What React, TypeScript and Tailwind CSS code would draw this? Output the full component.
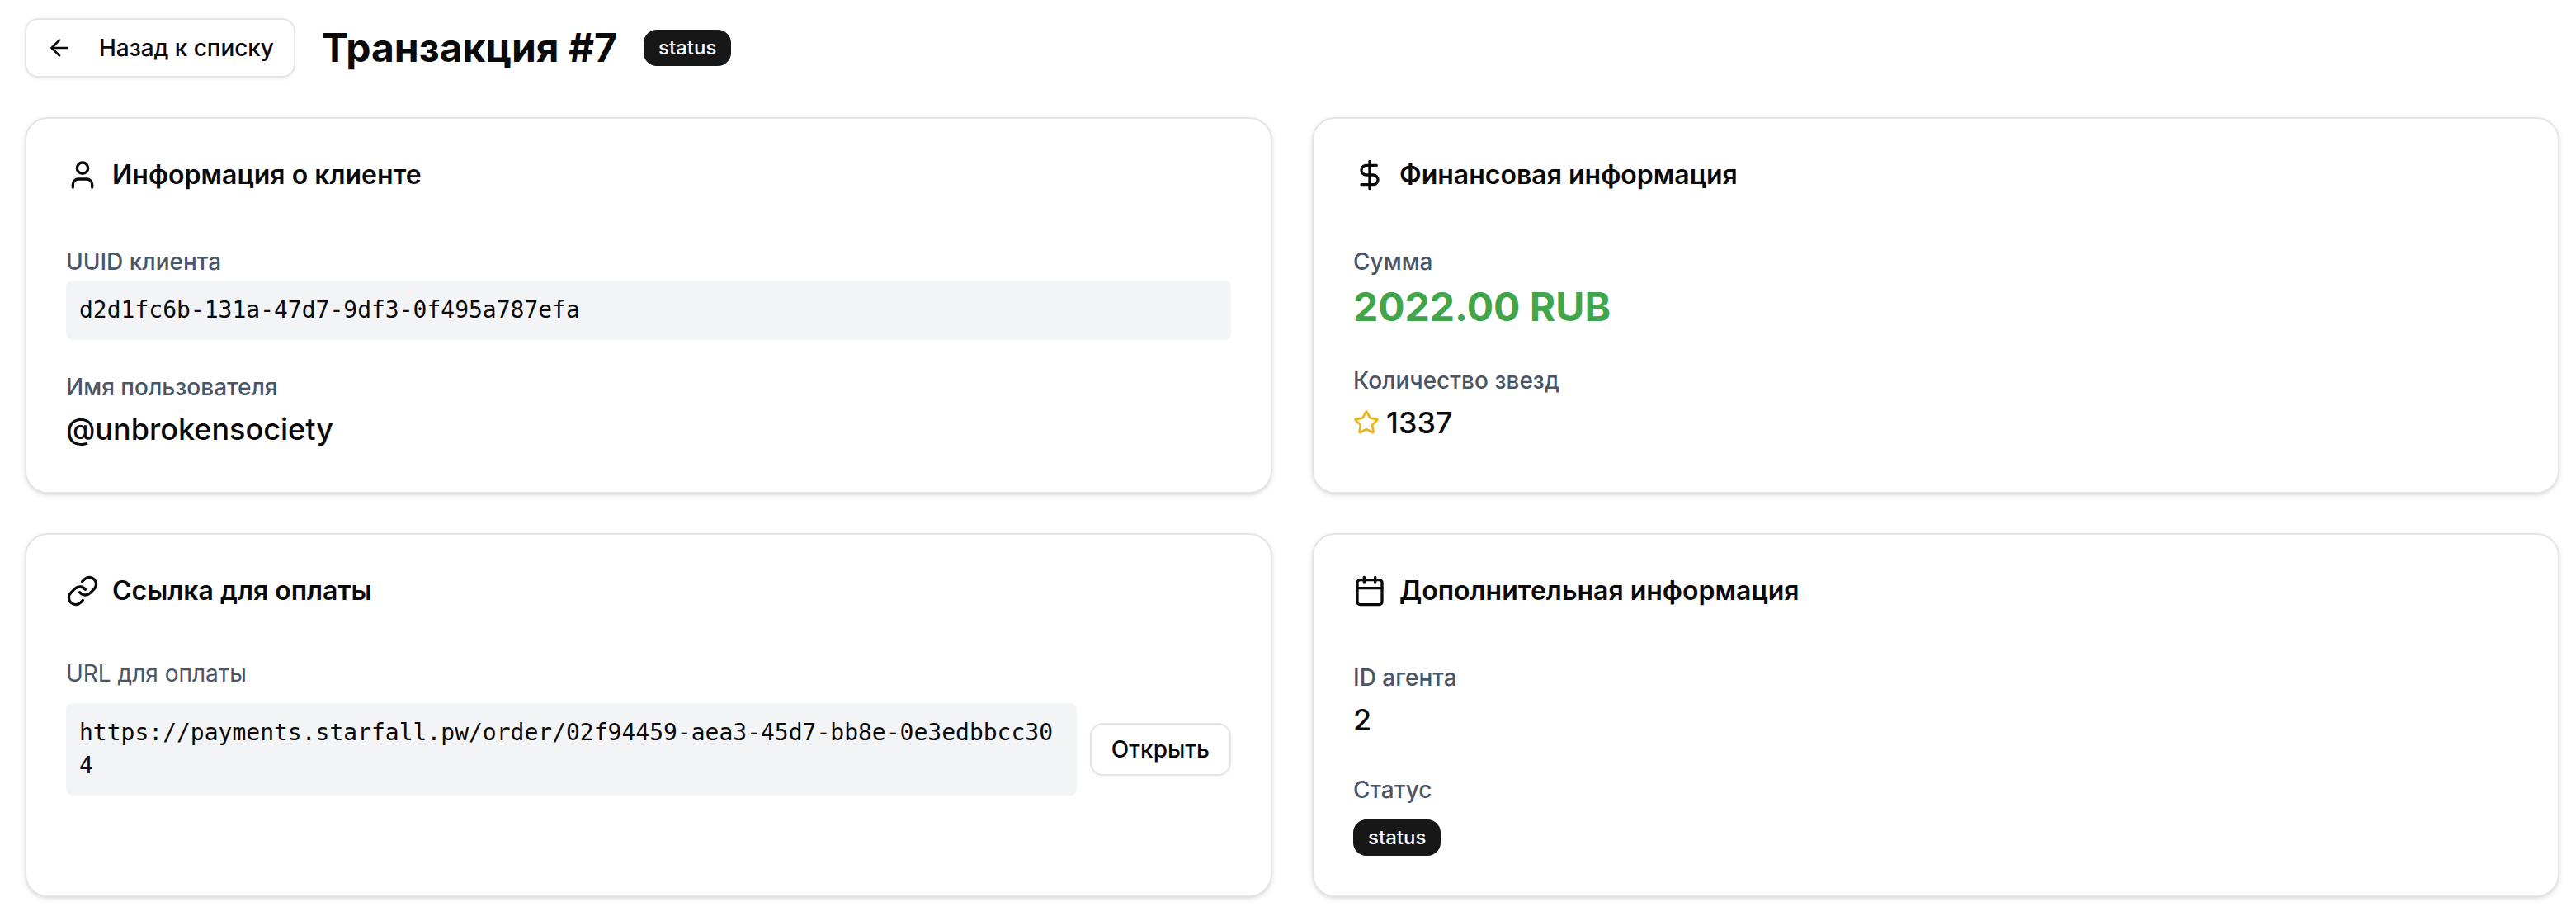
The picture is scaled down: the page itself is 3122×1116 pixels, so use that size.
import type { ReactNode } from "react";
import { ArrowLeft, Calendar, DollarSign, Link, Star, User } from "lucide-react";

type Transaction = {
  id: number;
  clientUuid: string;
  username: string;
  amount: string;
  currency: string;
  stars: number;
  paymentUrl: string;
  agentId: number;
  status: string;
};

const transaction: Transaction = {
  id: 7,
  clientUuid: "d2d1fc6b-131a-47d7-9df3-0f495a787efa",
  username: "@unbrokensociety",
  amount: "2022.00",
  currency: "RUB",
  stars: 1337,
  paymentUrl: "https://payments.starfall.pw/order/02f94459-aea3-45d7-bb8e-0e3edbbcc304",
  agentId: 2,
  status: "status",
};

function Badge({ children }: { children: ReactNode }) {
  return (
    <span className="inline-flex items-center justify-center rounded-[16px] border-2 border-[#171717] bg-[#171717] px-4 py-1 text-2xl leading-8 font-medium text-[#fafafa]">
      {children}
    </span>
  );
}

function Card({ icon, title, children }: { icon: ReactNode; title: string; children: ReactNode }) {
  return (
    <div className="flex min-w-0 flex-col rounded-[28px] border-2 border-[#e5e5e5] bg-white p-12 shadow-[0_2px_6px_0_rgb(0_0_0/0.1),0_2px_4px_-2px_rgb(0_0_0/0.1)]">
      <h2 className="mb-15 flex h-10 items-center gap-4 text-[32px] leading-none font-semibold">
        {icon}
        {title}
      </h2>
      {children}
    </div>
  );
}

function Label({ children }: { children: ReactNode }) {
  return (
    <div className="h-12 text-[32px] leading-12">
      <label className="text-[28px] font-medium text-[#4a5565]">{children}</label>
    </div>
  );
}

export default function TransactionPage() {
  return (
    <div className="min-h-[1116px] bg-white pt-[22px] pr-5 pl-[30px] font-['Inter','Liberation_Sans',sans-serif] text-[#0a0a0a]">
      <div className="mb-12 flex h-[72px] items-center gap-8">
        <button className="flex h-[72px] shrink-0 items-center gap-8 rounded-[16px] border-2 border-[#e5e5e5] bg-white px-6 text-[28px] leading-10 font-medium tracking-[-0.06px] whitespace-nowrap shadow-[0_2px_4px_0_rgb(0_0_0/0.05)]">
          <ArrowLeft className="size-8" />
          Назад к списку
        </button>
        <h1 className="text-5xl leading-[64px] font-bold whitespace-nowrap">Транзакция #{transaction.id}</h1>
        <Badge>{transaction.status}</Badge>
      </div>

      <div className="grid grid-cols-2 gap-12">
        {/* Клиент */}
        <Card icon={<User className="size-10" />} title="Информация о клиенте">
          <div className="space-y-8">
            <div>
              <Label>UUID клиента</Label>
              <p className="rounded-lg bg-gray-100 p-4 font-['DejaVu_Sans_Mono',monospace] text-[28px] leading-10">
                {transaction.clientUuid}
              </p>
            </div>
            <div>
              <Label>Имя пользователя</Label>
              <p className="text-4xl leading-[56px] font-medium">{transaction.username}</p>
            </div>
          </div>
        </Card>

        {/* Финансы */}
        <Card icon={<DollarSign className="size-10" />} title="Финансовая информация">
          <div className="space-y-8">
            <div>
              <Label>Сумма</Label>
              <p className="text-5xl leading-[64px] font-bold text-[#41a54c]">
                {transaction.amount} {transaction.currency}
              </p>
            </div>
            <div>
              <Label>Количество звезд</Label>
              <p className="flex items-center gap-2 text-4xl leading-[56px] font-medium">
                <Star className="size-8 text-[#e7b416]" />
                {transaction.stars}
              </p>
            </div>
          </div>
        </Card>

        {/* Оплата */}
        <Card icon={<Link className="size-10" />} title="Ссылка для оплаты">
          <div className="space-y-4">
            <p className="text-[28px] leading-10 text-[#4a5565]">URL для оплаты</p>
            <div className="flex items-center gap-4">
              <p className="min-w-0 flex-1 rounded-lg bg-gray-100 p-4 font-['DejaVu_Sans_Mono',monospace] text-[28px] leading-10 break-all">
                {transaction.paymentUrl}
              </p>
              <button className="flex h-16 shrink-0 items-center rounded-[16px] border-2 border-[#e5e5e5] bg-white px-6 text-[28px] leading-10 font-medium shadow-[0_2px_4px_0_rgb(0_0_0/0.05)]">
                Открыть
              </button>
            </div>
          </div>
        </Card>

        {/* Дополнительно */}
        <Card icon={<Calendar className="size-10" />} title="Дополнительная информация">
          <div className="space-y-8">
            <div>
              <Label>ID агента</Label>
              <p className="text-4xl leading-[56px] font-medium">{transaction.agentId}</p>
            </div>
            <div>
              <Label>Статус</Label>
              <div className="flex pt-[13px]">
                <Badge>{transaction.status}</Badge>
              </div>
            </div>
          </div>
        </Card>
      </div>
    </div>
  );
}
